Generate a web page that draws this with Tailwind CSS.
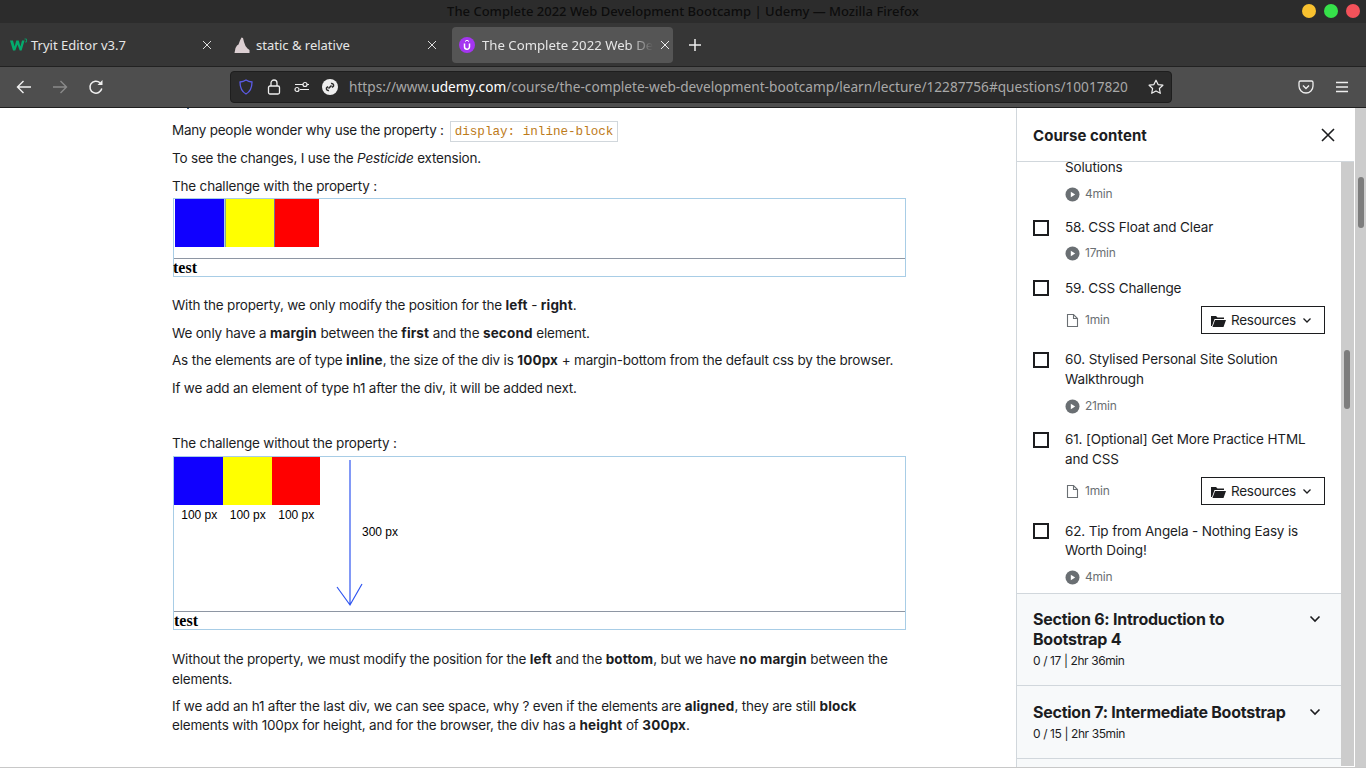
<!DOCTYPE html>
<html lang="en"><head><meta charset="utf-8">
<script src="https://cdn.jsdelivr.net/npm/@tailwindcss/browser@4"></script>
<title>Udemy</title></head>
<body class="bg-white">
<div class="w-[1366px] h-[768px] flex flex-col overflow-hidden font-['Inter',sans-serif]">
  <!-- title bar -->
  <div class="h-[23px] bg-[#2c2c2c] flex items-center relative shrink-0">
    <div class="w-full text-center text-[13px] font-medium text-[#0d0d0d] font-['Noto_Sans',sans-serif] leading-[23px]">The Complete 2022 Web Development Bootcamp | Udemy — Mozilla Firefox</div>
    <div class="absolute right-[6px] top-[4px] flex gap-[8px]">
      <span class="w-[14px] h-[14px] rounded-full bg-[#f8c12f]"></span>
      <span class="w-[14px] h-[14px] rounded-full bg-[#36e14a]"></span>
      <span class="w-[14px] h-[14px] rounded-full bg-[#f4525a]"></span>
    </div>
  </div>
  <!-- tab bar -->
  <div class="h-[44px] bg-[#363636] flex items-center shrink-0 border-b border-[#222] font-['Noto_Sans',sans-serif] text-[13px] text-[#e6e6e6] pl-[2px]">
    <div class="w-[222px] h-[36px] flex items-center pl-[8px] pr-[12px] gap-[4px]">
      <svg width="17" height="14" viewBox="0 0 17 14" class="shrink-0"><path d="M0 2.500h3l1.600 6 1.700-6h2.400l1.700 6 1.600-6h2.600l-3 10H9.700L7.500 6.500 5.300 12.500H3z" fill="#04aa6d"/><path d="M14.500 1h2v3h-1.500" stroke="#04aa6d" stroke-width=".8" fill="none"/></svg>
      <span class="flex-1 pt-[2px]">Tryit Editor v3.7</span>
      <svg width="10" height="10" viewBox="0 0 10 10"><path d="M1 1l8 8M9 1l-8 8" stroke="#ddd" stroke-width="1"/></svg>
    </div>
    <div class="w-[225px] h-[36px] flex items-center pl-[8px] pr-[14px] ml-[2px] gap-[6px]">
      <svg width="16" height="16" viewBox="0 0 16 16" class="shrink-0"><path d="M.5 16L1.500 11 3 8.500 4.500 7.500 6 3.500 7.500 .5 9 1 10 5 11.500 9 13.500 11.500 15.500 13 15.500 16z" fill="#dccfd2"/></svg>
      <span class="flex-1 pt-[2px]">static &amp; relative</span>
      <svg width="10" height="10" viewBox="0 0 10 10"><path d="M1 1l8 8M9 1l-8 8" stroke="#ddd" stroke-width="1"/></svg>
    </div>
    <div class="w-[221px] h-[36px] rounded-[4px] bg-[#555555] flex items-center pl-[7px] pr-[11px] ml-[1px] gap-[7px] overflow-hidden">
      <svg width="16" height="16" viewBox="0 0 16 16" class="shrink-0"><circle cx="8" cy="8" r="8" fill="#a435f0"/><path d="M5.500 6.500v3.200a2.500 2.500 0 0 0 5 0V6.500" stroke="#fff" stroke-width="1.500" fill="none"/><path d="M6 4.500L8 3.200l2 1.300" stroke="#fff" stroke-width="1" fill="none"/></svg>
      <span class="flex-1 whitespace-nowrap pt-[2px] text-[13.2px] [mask-image:linear-gradient(to_right,#000_86%,transparent)]">The Complete 2022 Web De</span>
      <svg width="10" height="10" viewBox="0 0 10 10" class="shrink-0"><path d="M1 1l8 8M9 1l-8 8" stroke="#eee" stroke-width="1"/></svg>
    </div>
    <svg width="14" height="14" viewBox="0 0 14 14" class="ml-[15px]"><path d="M7 1v12M1 7h12" stroke="#eee" stroke-width="1.500"/></svg>
  </div>
  <!-- nav bar -->
  <div class="h-[41px] bg-[#4e4e4e] flex items-center shrink-0 border-b border-[#1f1f1f] relative">
    <div class="flex items-center pl-[16px] gap-[20px] w-[230px]">
      <svg width="16" height="16" viewBox="0 0 16 16"><path d="M15 8H1.500M7.500 2L1.500 8l6 6" stroke="#f0f0f0" stroke-width="1.400" fill="none"/></svg>
      <svg width="16" height="16" viewBox="0 0 16 16"><path d="M1 8h13.500M8.500 2l6 6-6 6" stroke="#8a8a8a" stroke-width="1.400" fill="none"/></svg>
      <svg width="16" height="16" viewBox="0 0 16 16"><path d="M13.800 9.500A6 6 0 1 1 12 3.700" stroke="#f0f0f0" stroke-width="1.500" fill="none"/><path d="M14.500 1v5h-5z" fill="#f0f0f0"/></svg>
    </div>
    <div class="w-[942px] h-[32px] bg-[#2b2b2b] rounded-[4px] border border-[#1e1e1e] flex items-center pl-[7px] pr-[7px] font-['Noto_Sans',sans-serif] text-[13.65px]">
      <svg width="16" height="16" viewBox="0 0 16 16" class="shrink-0"><path d="M8 1c2 1.300 4 1.800 6 2 0 6-1.500 9.500-6 12C3.500 12.500 2 9 2 3c2-.2 4-.7 6-2z" stroke="#5b5be6" stroke-width="1.300" fill="none"/></svg>
      <svg width="14" height="16" viewBox="0 0 14 16" class="shrink-0 ml-[13px]"><rect x="1.500" y="7" width="11" height="8" rx="1.500" stroke="#eee" stroke-width="1.300" fill="none"/><path d="M4 7V4a3 3 0 0 1 6 0v3" stroke="#eee" stroke-width="1.300" fill="none"/></svg>
      <svg width="16" height="16" viewBox="0 0 16 16" class="shrink-0 ml-[13px]"><path d="M1 5.500h8M13 5.500h2M6 10.500h9" stroke="#eee" stroke-width="1.200"/><circle cx="11" cy="5.500" r="2" stroke="#eee" stroke-width="1.200" fill="none"/><circle cx="3" cy="10.500" r="2" stroke="#eee" stroke-width="1.200" fill="none"/></svg>
      <svg width="16" height="16" viewBox="0 0 16 16" class="shrink-0 ml-[12px]"><circle cx="8" cy="8" r="8" fill="#eee"/><path d="M9 4.500a2 2 0 0 1 2.500 2.500L10 8.500M7 11.500A2 2 0 0 1 4.500 9L6 7.500M6.500 9.500l3-3" stroke="#2b2b2b" stroke-width="1.500" fill="none"/></svg>
      <span class="ml-[11px] pt-[1px] flex-1 whitespace-nowrap text-[#a8a8a8]">https://www.<span class="text-white">udemy.com</span>/course/the-complete-web-development-bootcamp/learn/lecture/12287756#questions/10017820</span>
      <svg width="16" height="16" viewBox="0 0 16 16" class="shrink-0"><path d="M8 1.200l2.100 4.400 4.800.6-3.500 3.300.9 4.800L8 11.900l-4.300 2.400.9-4.800L1.100 6.200l4.800-.6z" stroke="#eee" stroke-width="1.200" fill="none" stroke-linejoin="round"/></svg>
    </div>
    <div class="flex items-center pl-[126px] gap-[20px]">
      <svg width="16" height="16" viewBox="0 0 16 16"><path d="M2.500 2h11A1.500 1.500 0 0 1 15 3.500V7a7 7 0 0 1-14 0V3.500A1.500 1.500 0 0 1 2.500 2z" stroke="#eee" stroke-width="1.300" fill="none"/><path d="M5 6.500l3 3 3-3" stroke="#eee" stroke-width="1.400" fill="none"/></svg>
      <svg width="16" height="16" viewBox="0 0 16 16"><path d="M2 3.500h12M2 8h12M2 12.500h12" stroke="#eee" stroke-width="1.300"/></svg>
    </div>
  </div>
  <!-- page -->
  <div class="flex-1 flex min-h-0 border-b border-[#c8c8c8]">
    <!-- main -->
    <div class="w-[1016px] shrink-0 overflow-hidden pl-[172px] text-[13.5px] tracking-[-0.19px] leading-[20px] text-[#1c1d1f]">
      <div class="w-[734px]">
        <div class="h-[12px] pl-[15px]"><span class="block w-[2px] h-[1px] bg-[#4a6a90]"></span></div>
        <p class="flex items-center h-[20px]"><span class="tracking-[-0.25px]">Many people wonder why use the property :</span><code class="font-['Liberation_Mono',monospace] text-[12.6px] tracking-normal text-[#bd7b1a] border border-[#d1d7dc] h-[21px] leading-[20px] px-[4px] ml-[6px] mt-[2px]">display: inline-block</code></p>
        <p class="mt-[8px]">To see the changes, I use the <em>Pesticide</em> extension.</p>
        <p class="mt-[8px]">The challenge with the property :</p>
        <div class="h-[79px] mt-[2px] border border-[#a8cde6] ml-[1px] flex flex-col">
          <div class="h-[60px] shrink-0 border-b border-[#8e96a3] pl-[1px] flex items-start">
            <div class="w-[50px] h-[48px] bg-[#1000ff] border-r border-[#a8cde6]"></div>
            <div class="w-[49px] h-[48px] bg-[#ffff00] border-l border-[#88aa88]"></div>
            <div class="w-[45px] h-[48px] bg-[#ff0000] border-l border-[#7a6a9a]"></div>
          </div>
          <div class="font-['Liberation_Serif',serif] font-bold text-[16px] tracking-normal leading-[17px] text-black -ml-[1px]">test</div>
        </div>
        <p class="mt-[18px]">With the property, we only modify the position for the <b class="tracking-[0.15px]">left</b> - <b class="tracking-[0.15px]">right</b>.</p>
        <p class="mt-[8px]">We only have a <b class="tracking-[0.15px]">margin</b> between the <b class="tracking-[0.15px]">first</b> and the <b class="tracking-[0.15px]">second</b> element.</p>
        <p class="mt-[7px]">As the elements are of type <b class="tracking-[0.15px]">inline</b>, the size of the div is <b class="tracking-[0.15px]">100px</b> + margin-bottom from the default css by the browser.</p>
        <p class="mt-[8px]">If we add an element of type h1 after the div, it will be added next.</p>
        <p class="mt-[35px]">The challenge without the property :</p>
        <div class="h-[174px] mt-[3px] border border-[#a8cde6] ml-[1px] flex flex-col relative">
          <div class="h-[155px] border-b border-[#8e96a3] shrink-0">
            <div class="flex">
              <div class="w-[49px] h-[48px] bg-[#1000ff]"></div>
              <div class="w-[48.500px] h-[48px] bg-[#ffff00]"></div>
              <div class="w-[48.500px] h-[48px] bg-[#ff0000]"></div>
            </div>
            <div class="flex font-['Liberation_Sans',sans-serif] text-[12px] tracking-normal leading-[14px] text-black mt-[3px] pl-[1px]">
              <span class="w-[48.500px] text-center">100 px</span><span class="w-[48.500px] text-center">100 px</span><span class="w-[48.500px] text-center">100 px</span>
            </div>
          </div>
          <div class="font-['Liberation_Serif',serif] font-bold text-[16px] tracking-normal leading-[18px] text-black">test</div>
          <svg class="absolute left-[161px] top-[3px]" width="28" height="148" viewBox="0 0 28 148"><path d="M15 0v144M2 127l13 18 12-21" stroke="#2f55f0" stroke-width="1.200" fill="none"/></svg>
          <span class="absolute left-[188px] top-[68px] font-['Liberation_Sans',sans-serif] text-[12px] tracking-normal leading-[14px] text-black">300 px</span>
        </div>
        <p class="mt-[19px]">Without the property, we must modify the position for the <b class="tracking-[0.15px]">left</b> and the <b class="tracking-[0.15px]">bottom</b>, but we have <b class="tracking-[0.15px]">no margin</b> between the elements.</p>
        <p class="mt-[8px] leading-[19px]">If we add an h1 after the last div, we can see space, why ? even if the elements are <b class="tracking-[0.15px]">aligned</b>, they are still <b class="tracking-[0.15px]">block</b> elements with 100px for height, and for the browser, the div has a <b class="tracking-[0.15px]">height</b> of <b class="tracking-[0.15px]">300px</b>.</p>
      </div>
    </div>
    <!-- sidebar -->
    <div class="w-[338px] shrink-0 flex flex-col border-l border-[#d1d7dc] min-h-0">
      <div class="h-[54px] shrink-0 border-b border-[#d1d7dc] flex items-center justify-between pl-[16px] pr-[19px] z-10 bg-white">
        <span class="font-bold text-[15px] tracking-[0.05px] text-[#1c1d1f] pt-[3px]">Course content</span>
        <svg width="14" height="14" viewBox="0 0 14 14"><path d="M1 1l12 12M13 1L1 13" stroke="#1c1d1f" stroke-width="1.600"/></svg>
      </div>
      <div class="flex-1 min-h-0 flex overflow-hidden">
        <div class="w-[324px] shrink-0 text-[13.5px] tracking-[-0.15px] leading-[20px] text-[#1c1d1f] -mt-[5px]">
          <div class="pl-[48px] pr-[16px]">Solutions</div>
          <div class="pl-[48px] mt-[7px] flex items-center gap-[5px] text-[12px] tracking-[-0.2px] text-[#6a6f73]">
            <svg width="15" height="15" viewBox="0 0 15 15"><circle cx="7.500" cy="7.500" r="7" fill="#6a6f73"/><path d="M5.800 4.800v5.400l4.400-2.700z" fill="#fff"/></svg>4min</div>

          <div class="flex pl-[16px] pr-[16px] mt-[13px]">
            <span class="w-[16px] h-[16px] border-2 border-[#1c1d1f] shrink-0 mt-[3px]"></span>
            <div class="ml-[16px] flex-1"><div>58. CSS Float and Clear</div>
              <div class="mt-[6px] flex items-center gap-[5px] text-[12px] tracking-[-0.2px] text-[#6a6f73]"><svg width="15" height="15" viewBox="0 0 15 15"><circle cx="7.500" cy="7.500" r="7" fill="#6a6f73"/><path d="M5.800 4.800v5.400l4.400-2.700z" fill="#fff"/></svg>17min</div></div>
          </div>

          <div class="flex pl-[16px] pr-[16px] mt-[15px]">
            <span class="w-[16px] h-[16px] border-2 border-[#1c1d1f] shrink-0 mt-[2px]"></span>
            <div class="ml-[16px] flex-1"><div>59. CSS Challenge</div>
              <div class="mt-[8px] flex items-center justify-between text-[12px] tracking-[-0.2px] text-[#6a6f73]">
                <span class="flex items-center gap-[5px]"><svg width="15" height="15" viewBox="0 0 15 15"><path d="M2.500 1.500h6l4 4v8h-10z M8.500 1.500v4h4" stroke="#6a6f73" stroke-width="1.100" fill="none"/></svg>1min</span>
                <span class="w-[124px] h-[28px] border border-[#1c1d1f] flex items-center pl-[9px] text-[13.5px] tracking-[-0.25px] text-[#1c1d1f] gap-[5px]"><svg width="15" height="13" viewBox="0 0 15 13"><path d="M0 2h5l1.500 1.500H13V5H3.500L1 12H0zM4 6h11l-2.500 7H1.500z" fill="#1c1d1f"/></svg>Resources<svg class="ml-[1px]" width="10" height="10" viewBox="0 0 10 10"><path d="M1.500 3.500L5 7l3.500-3.500" stroke="#1c1d1f" stroke-width="1.300" fill="none"/></svg></span>
              </div></div>
          </div>

          <div class="flex pl-[16px] pr-[16px] mt-[15px]">
            <span class="w-[16px] h-[16px] border-2 border-[#1c1d1f] shrink-0 mt-[3px]"></span>
            <div class="ml-[16px] flex-1"><div>60. Stylised Personal Site Solution Walkthrough</div>
              <div class="mt-[7px] flex items-center gap-[5px] text-[12px] tracking-[-0.2px] text-[#6a6f73]"><svg width="15" height="15" viewBox="0 0 15 15"><circle cx="7.500" cy="7.500" r="7" fill="#6a6f73"/><path d="M5.800 4.800v5.400l4.400-2.700z" fill="#fff"/></svg>21min</div></div>
          </div>

          <div class="flex pl-[16px] pr-[16px] mt-[13px]">
            <span class="w-[16px] h-[16px] border-2 border-[#1c1d1f] shrink-0 mt-[3px]"></span>
            <div class="ml-[16px] flex-1"><div>61. [Optional] Get More Practice HTML and CSS</div>
              <div class="mt-[8px] flex items-center justify-between text-[12px] tracking-[-0.2px] text-[#6a6f73]">
                <span class="flex items-center gap-[5px]"><svg width="15" height="15" viewBox="0 0 15 15"><path d="M2.500 1.500h6l4 4v8h-10z M8.500 1.500v4h4" stroke="#6a6f73" stroke-width="1.100" fill="none"/></svg>1min</span>
                <span class="w-[124px] h-[28px] border border-[#1c1d1f] flex items-center pl-[9px] text-[13.5px] tracking-[-0.25px] text-[#1c1d1f] gap-[5px]"><svg width="15" height="13" viewBox="0 0 15 13"><path d="M0 2h5l1.500 1.500H13V5H3.500L1 12H0zM4 6h11l-2.500 7H1.500z" fill="#1c1d1f"/></svg>Resources<svg class="ml-[1px]" width="10" height="10" viewBox="0 0 10 10"><path d="M1.500 3.500L5 7l3.500-3.500" stroke="#1c1d1f" stroke-width="1.300" fill="none"/></svg></span>
              </div></div>
          </div>

          <div class="flex pl-[16px] pr-[16px] mt-[17px]">
            <span class="w-[16px] h-[16px] border-2 border-[#1c1d1f] shrink-0 mt-[1px]"></span>
            <div class="ml-[16px] flex-1"><div class="leading-[19px]">62. Tip from Angela - Nothing Easy is Worth Doing!</div>
              <div class="mt-[7px] flex items-center gap-[5px] text-[12px] tracking-[-0.2px] text-[#6a6f73]"><svg width="15" height="15" viewBox="0 0 15 15"><circle cx="7.500" cy="7.500" r="7" fill="#6a6f73"/><path d="M5.800 4.800v5.400l4.400-2.700z" fill="#fff"/></svg>4min</div></div>
          </div>

          <div class="mt-[6px] border-t border-[#d1d7dc] bg-[#f7f9fa] h-[92px] pl-[16px] pr-[20px] pt-[15px] flex">
            <div class="flex-1"><div class="font-bold text-[16px] tracking-[-0.25px] pr-[50px]">Section 6: Introduction to Bootstrap 4</div><div class="text-[12px] tracking-[-0.4px] leading-[18px] mt-[3px]">0 / 17 | 2hr 36min</div></div>
            <svg class="mt-[5px]" width="12" height="10" viewBox="0 0 12 10"><path d="M1.500 2.500L6 7l4.500-4.500" stroke="#1c1d1f" stroke-width="1.600" fill="none"/></svg>
          </div>
          <div class="border-t border-[#d1d7dc] bg-[#f7f9fa] h-[73px] pl-[16px] pr-[20px] pt-[16px] flex">
            <div class="flex-1"><div class="font-bold text-[16px] tracking-[-0.25px]">Section 7: Intermediate Bootstrap</div><div class="text-[12px] tracking-[-0.4px] leading-[18px] mt-[3px]">0 / 15 | 2hr 35min</div></div>
            <svg class="mt-[5px]" width="12" height="10" viewBox="0 0 12 10"><path d="M1.500 2.500L6 7l4.500-4.500" stroke="#1c1d1f" stroke-width="1.600" fill="none"/></svg>
          </div>
          <div class="border-t border-[#d1d7dc] bg-[#f7f9fa] h-[20px]"></div>
        </div>
        <div class="w-[13px] shrink-0 bg-[#cccccc] relative mb-[1px]"><span class="absolute left-[3px] top-[188px] w-[6px] h-[59px] rounded-full bg-[#7d7d7d]"></span></div>
      </div>
    </div>
    <div class="ml-[1px] flex-1 bg-[#cccccc] relative"><span class="absolute left-[3px] top-[69px] w-[6px] h-[51px] rounded-full bg-[#7d7d7d]"></span></div>
  </div>
</div>
</body></html>
